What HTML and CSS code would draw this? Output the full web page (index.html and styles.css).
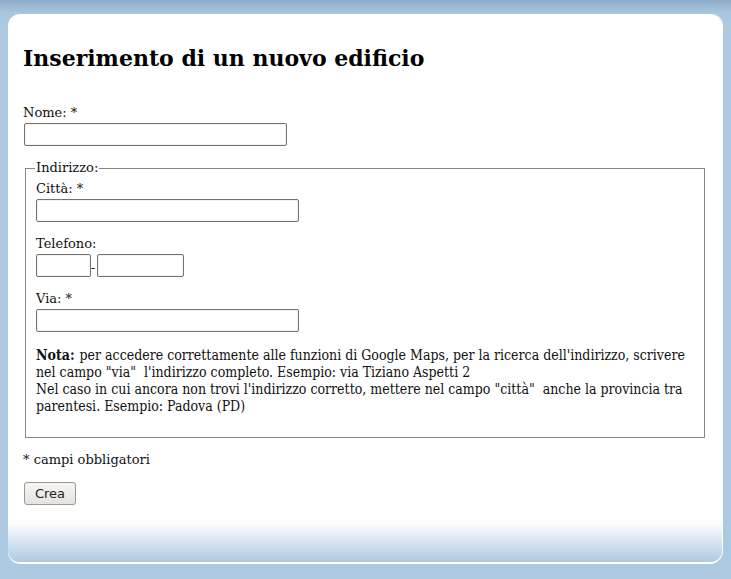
FILE: index.html
```html
<!DOCTYPE html>
<html>
<head>
<meta charset="utf-8">
<link rel="stylesheet" href="styles.css">
</head>
<body>
<div class="page">
  <div class="box">
    <h1 class="title">Inserimento di un nuovo edificio</h1>
    <form class="form">
      <div class="field">
        <label class="label">Nome: *</label>
        <input class="input wide" type="text">
      </div>
      <fieldset class="group">
        <legend class="legend">Indirizzo:</legend>
        <div class="field">
          <label class="label">Città: *</label>
          <input class="input wide" type="text">
        </div>
        <div class="field">
          <label class="label">Telefono:</label>
          <div class="phone"><input class="input pre" type="text"><span class="dash">-</span><input class="input num" type="text"></div>
        </div>
        <div class="field">
          <label class="label">Via: *</label>
          <input class="input wide" type="text">
        </div>
        <p class="note"><b class="note-key">Nota:</b> per accedere correttamente alle funzioni di Google Maps, per la ricerca dell'indirizzo, scrivere nel campo "via" &nbsp;l'indirizzo completo. Esempio: via Tiziano Aspetti 2<br>Nel caso in cui ancora non trovi l'indirizzo corretto, mettere nel campo "città" &nbsp;anche la provincia tra parentesi. Esempio: Padova (PD)</p>
      </fieldset>
      <p class="required">* campi obbligatori</p>
      <button class="btn" type="button">Crea</button>
    </form>
  </div>
</div>
</body>
</html>
```
FILE: styles.css
```css
html, body {
  margin: 0;
  padding: 0;
}
body {
  background: #abc9e1;
  font-family: "DejaVu Serif", serif;
  font-size: 13px;
  color: #111;
}
.page {
  background: linear-gradient(to bottom, #8fadc9 0px, #a9c6df 13px, #abc9e1 20px);
  padding: 14px 9px 15px 8px;
  height: 579px;
  box-sizing: border-box;
}
.box {
  background: linear-gradient(to bottom, #ffffff 0, #ffffff 505px, #fcfdfe 510px, #aecae2 548px);
  border-radius: 12px;
  border-bottom: 1px solid #ffffff;
  box-shadow: 1px 0 0 #ffffff, 0 1px 0 #ffffff;
  height: 549px;
  box-sizing: border-box;
  padding: 1px 15px 0 15px;
}
.title {
  font-family: "DejaVu Serif", serif;
  font-size: 22px;
  font-weight: bold;
  margin: 28px 0 0 0;
  line-height: 30px;
  color: #000;
}
.form {
  margin-top: 30px;
}
.field {
  display: flex;
  flex-direction: column;
  align-items: flex-start;
}
.label {
  font-size: 13px;
  line-height: 20px;
  height: 20px;
}
.input {
  border: 1px solid #7c716a;
  border-radius: 2px;
  height: 23px;
  box-sizing: border-box;
  padding: 0;
  margin: 0 0 0 1px;
  background: #fff;
  box-shadow: inset 0 0 0 1px #f4f2f0;
}
.group .input {
  margin-left: 0;
}
.wide {
  width: 263px;
}
.phone {
  display: flex;
  align-items: center;
}
.pre {
  width: 55px;
}
.num {
  width: 87px;
}
.dash {
  font-size: 12px;
  width: 6px;
  line-height: 14px;
  margin-top: 4px;
}
.group {
  margin: 15px 2px 0 2px;
  border: 1px solid #8a8683;
  padding: 4px 10px 10px 10px;
}
.group .field + .field {
  margin-top: 12px;
}
.legend {
  padding: 0 1px;
  font-size: 13px;
  line-height: 14px;
  margin-left: -1px;
}
.note {
  font-family: "DejaVu Serif Condensed", "DejaVu Serif", serif;
  font-stretch: condensed;
  font-size: 14px;
  line-height: 17px;
  margin: 15px 0 12px 0;
}
.note-key {
  font-weight: bold;
  margin-right: 1px;
}
.required {
  margin: 14px 0 0 0;
  line-height: 16px;
}
.btn {
  display: block;
  margin: 14px 0 0 1px;
  font-family: "DejaVu Sans", sans-serif;
  font-size: 13px;
  width: 52px;
  height: 23px;
  padding: 0;
  border: 1px solid #9c9690;
  border-radius: 3px;
  background: linear-gradient(to bottom, #f6f5f3, #e6e3df);
  color: #222;
}
```
